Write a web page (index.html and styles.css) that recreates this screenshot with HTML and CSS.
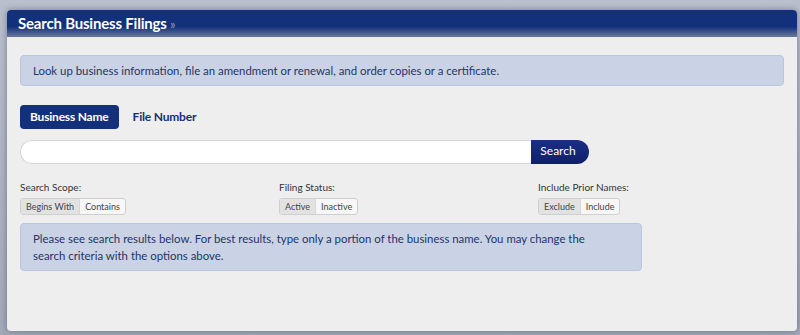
FILE: index.html
```html
<!DOCTYPE html>
<html>
	<head>
		<meta charset="UTF-8">
		<title>Search Business Filings</title>
		<link rel="stylesheet" href="styles.css">
	</head>
	<body>
		<div class="panel">
			<div class="panel-head">
				<h1>Search Business Filings <span class="raquo">&raquo;</span></h1>
			</div>
			<div class="panel-body">
				<div class="note note-top">Look up business information, file an amendment or renewal, and order copies or a certificate.</div>
				<ul class="tabs">
					<li class="active">Business Name</li>
					<li>File Number</li>
				</ul>
				<div class="search">
					<input type="text" class="search-input">
					<button class="search-btn">Search</button>
				</div>
				<div class="options">
					<div class="opt">
						<label>Search Scope:</label>
						<div class="toggle">
							<span class="on">Begins With</span><span>Contains</span>
						</div>
					</div>
					<div class="opt">
						<label>Filing Status:</label>
						<div class="toggle">
							<span class="on">Active</span><span>Inactive</span>
						</div>
					</div>
					<div class="opt">
						<label>Include Prior Names:</label>
						<div class="toggle">
							<span class="on">Exclude</span><span>Include</span>
						</div>
					</div>
				</div>
				<div class="note note-result">Please see search results below. For best results, type only a portion of the business name. You may change the search criteria with the options above.</div>
			</div>
		</div>
	</body>
</html>
```

FILE: styles.css
```css
html,
body {
	margin: 0;
	padding: 0;
	height: 335px;
	overflow: hidden;
}

body {
	background: linear-gradient(#b9bfcd, #a3a9b9);
	font-family: Lato, "Open Sans", sans-serif;
	padding: 10px 3px 0 7px;
	box-sizing: border-box;
}

.panel {
	height: 321px;
	background: #eeeeee;
	border-radius: 4px;
	box-shadow: 0 0 6px rgba(40, 45, 60, 0.45);
	overflow: hidden;
}

.panel-head {
	height: 27px;
	background: linear-gradient(#13307a 0%, #13307a 62%, #6b799c 100%);
	padding: 0 11px;
}

.panel-head h1 {
	margin: 0;
	font-size: 15px;
	line-height: 27px;
	font-weight: bold;
	color: #ffffff;
	letter-spacing: -0.2px;
}

.raquo {
	color: #8c98bb;
	font-weight: normal;
	font-size: 13px;
}

.panel-body {
	padding: 18px 13px 0 13px;
}

.note {
	background: #cad3e5;
	border: 1px solid #b9c6dd;
	border-radius: 4px;
	color: #1f3466;
	font-size: 11.4px;
	box-sizing: border-box;
}

.note-top {
	height: 31px;
	line-height: 29px;
	padding: 0 12px;
}

.tabs {
	list-style: none;
	margin: 19px 0 0 0;
	padding: 0;
	display: flex;
	gap: 4px;
}

.tabs li {
	height: 24px;
	line-height: 24px;
	padding: 0 10px;
	font-size: 12px;
	font-weight: bold;
	color: #13307a;
	border-radius: 4px;
	letter-spacing: -0.2px;
}

.tabs li.active {
	background: #13307a;
	color: #ffffff;
}

.search {
	display: flex;
	margin-top: 11px;
	width: 569px;
}

.search-input {
	flex: 1;
	height: 24px;
	box-sizing: border-box;
	border: 1px solid #d6d6d6;
	border-right: none;
	border-radius: 12px 0 0 12px;
	background: #ffffff;
	margin: 0;
	outline: none;
}

.search-btn {
	width: 58px;
	height: 24px;
	border: none;
	border-radius: 0 12px 12px 0;
	background: linear-gradient(#1a2f85, #0f1f6a);
	color: #ffffff;
	font-family: Lato, sans-serif;
	font-size: 12px;
	line-height: 20px;
	padding: 0 4px 3px 0;
	margin: 0;
}

.options {
	display: grid;
	grid-template-columns: 259px 259px 1fr;
	margin-top: 17px;
}

.opt label {
	display: block;
	font-size: 10px;
	color: #333333;
	height: 12px;
	line-height: 12px;
}

.toggle {
	display: inline-flex;
	margin-top: 5px;
	border: 1px solid #cfcfcf;
	border-radius: 3px;
	overflow: hidden;
	background: #f7f7f7;
}

.toggle span {
	font-size: 9px;
	color: #444444;
	height: 15px;
	line-height: 15px;
	padding: 0 5px;
}

.toggle span + span {
	border-left: 1px solid #d8d8d8;
}

.toggle span.on {
	background: #e2e2e2;
}

.note-result {
	width: 622px;
	margin-top: 8px;
	padding: 6px 50px 6px 12px;
	line-height: 17px;
}
```
